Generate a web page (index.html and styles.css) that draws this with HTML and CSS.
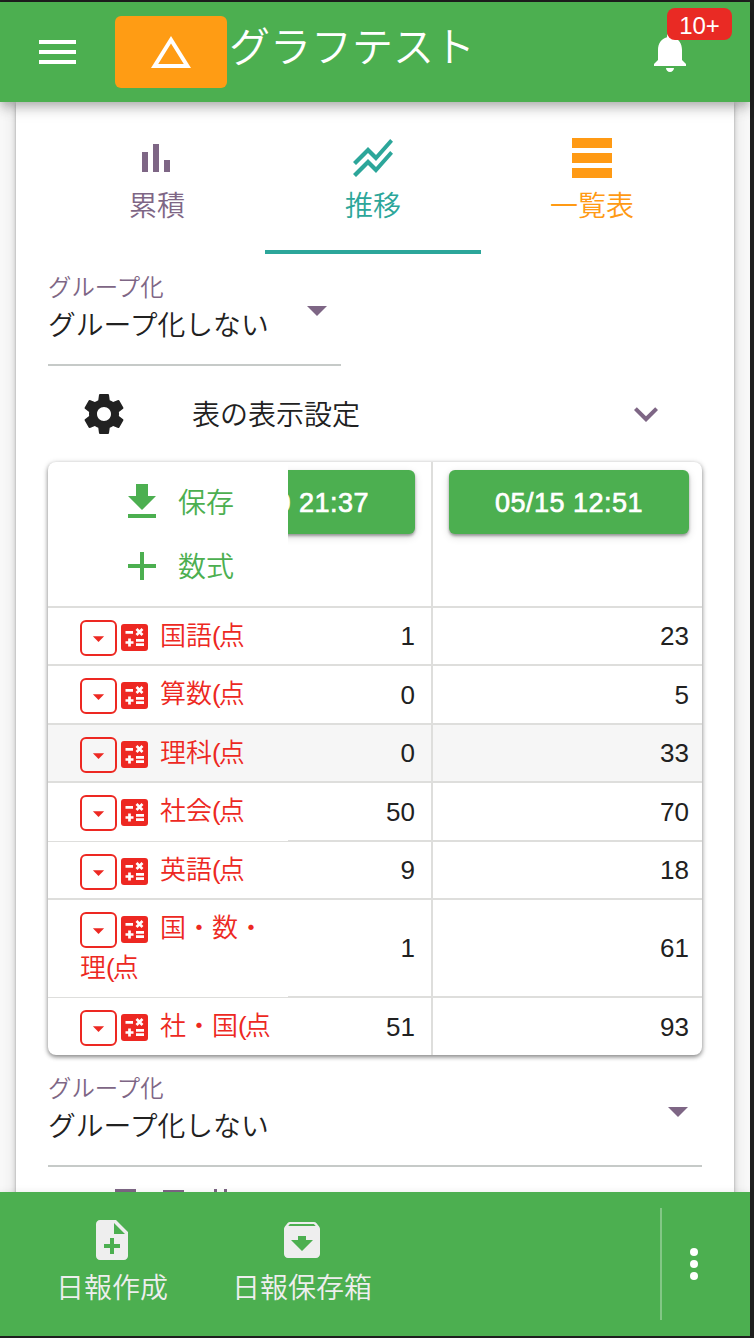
FILE: index.html
```html
<!DOCTYPE html>
<html lang="ja">
<head>
<meta charset="utf-8">
<title>グラフテスト</title>
<link rel="stylesheet" href="styles.css">
</head>
<body>
<svg class="defs" aria-hidden="true">
  <symbol id="down" viewBox="0 0 24 24"><path d="M7 10l5 5 5-5z"/></symbol>
  <symbol id="calc" viewBox="0 0 27 27">
    <rect width="27" height="27" rx="3"/>
    <g stroke="#fff" stroke-width="2.7" fill="none"><path d="M4.5 8.3H12M15.5 5l6 6M21.5 5l-6 6M4.5 18.5h8M8.5 14.5v8M15 16.3h8M15 20.6h8"/></g>
  </symbol>
</svg>
<div class="app">
  <header class="bar">
    <svg class="menu" viewBox="0 0 37 24"><path d="M0 0h37v4H0zM0 10h37v4H0zM0 20h37v4H0z"/></svg>
    <button class="logo"><svg class="icon" viewBox="0 0 24 24"><path d="M12 7.77L18.39 18H5.61L12 7.77M12 4L2 20h20L12 4z"/></svg></button>
    <h1 class="title">グラフテスト</h1>
    <div class="bell">
      <svg class="icon" viewBox="0 0 24 24"><path d="M12 22c1.1 0 2-.9 2-2h-4c0 1.1.89 2 2 2zm6-6v-5c0-3.07-1.64-5.64-4.5-6.32V4c0-.83-.67-1.5-1.5-1.5s-1.5.67-1.5 1.5v.68C7.63 5.36 6 7.92 6 11v5l-2 2v1h16v-1l-2-2z"/></svg>
      <span class="badge">10+</span>
    </div>
  </header>

  <main class="content">
    <section class="sheet">
      <nav class="tabs">
        <a class="tab purple"><svg class="icon" viewBox="0 0 48 48"><path d="M9 18h6v20H9zM20 10h6v28h-6zM31 26h6v12h-6z"/></svg><span>累積</span></a>
        <a class="tab active"><svg class="icon" viewBox="0 0 24 24"><path d="M2 19.99l7.5-7.51 4 4 7.09-7.97L22 9.92l-8.5 9.56-4-4-6 6.01-1.5-1.5zm1.5-4.5l6-6.01 4 4L22 3.92l-1.41-1.41-7.09 7.97-4-4L2 13.99l1.5 1.5z"/></svg><span>推移</span></a>
        <a class="tab orange"><svg class="icon" viewBox="0 0 48 48"><path d="M4 4h40v10H4zM4 19h40v10H4zM4 34h40v10H4z"/></svg><span>一覧表</span></a>
      </nav>

      <div class="select narrow">
        <div><div class="label">グループ化</div><div class="value">グループ化しない</div></div>
        <svg class="icon"><use href="#down"/></svg>
      </div>

      <div class="settings">
        <svg class="icon" viewBox="0 0 24 24"><path d="M19.43 12.98c.04-.32.07-.64.07-.98s-.03-.66-.07-.98l2.11-1.65c.19-.15.24-.42.12-.64l-2-3.46c-.12-.22-.39-.3-.61-.22l-2.49 1c-.52-.4-1.08-.73-1.69-.98l-.38-2.65C14.46 2.18 14.25 2 14 2h-4c-.25 0-.46.18-.49.42l-.38 2.65c-.61.25-1.17.59-1.69.98l-2.49-1c-.23-.09-.49 0-.61.22l-2 3.46c-.13.22-.07.49.12.64l2.11 1.65c-.04.32-.07.65-.07.98s.03.66.07.98l-2.11 1.65c-.19.15-.24.42-.12.64l2 3.46c.12.22.39.3.61.22l2.49-1c.52.4 1.08.73 1.69.98l.38 2.65c.03.24.24.42.49.42h4c.25 0 .46-.18.49-.42l.38-2.65c.61-.25 1.17-.59 1.69-.98l2.49 1c.23.09.49 0 .61-.22l2-3.46c.12-.22.07-.49-.12-.64l-2.11-1.65zM12 15.5c-1.93 0-3.5-1.57-3.5-3.5s1.57-3.5 3.5-3.5 3.5 1.57 3.5 3.5-1.57 3.5-3.5 3.5z"/></svg>
        <span class="settings-name">表の表示設定</span>
        <svg class="icon purple" viewBox="0 0 24 24"><path d="M16.59 8.59L12 13.17 7.41 8.59 6 10l6 6 6-6z"/></svg>
      </div>

      <div class="table">
        <div class="row head">
          <div class="actions">
            <a class="action"><svg class="icon" viewBox="0 0 24 24"><path d="M19 9h-4V3H9v6H5l7 7 7-7zM5 18v2h14v-2z"/></svg><span>保存</span></a>
            <a class="action"><svg class="icon" viewBox="0 0 24 24"><path d="M19 13h-6v6h-2v-6H5v-2h6V5h2v6h6z"/></svg><span>数式</span></a>
          </div>
          <div class="date clip"><button class="chip">05/10 21:37</button></div>
          <div class="date"><button class="chip">05/15 12:51</button></div>
        </div>
        <div class="row"><div class="name"><span class="drop"><svg class="tiny"><use href="#down"/></svg></span><svg class="calc"><use href="#calc"/></svg>国語<i>(</i>点</div><div class="num">1</div><div class="num">23</div></div>
        <div class="row tall"><div class="name"><span class="drop"><svg class="tiny"><use href="#down"/></svg></span><svg class="calc"><use href="#calc"/></svg>算数<i>(</i>点</div><div class="num">0</div><div class="num">5</div></div>
        <div class="row hover"><div class="name"><span class="drop"><svg class="tiny"><use href="#down"/></svg></span><svg class="calc"><use href="#calc"/></svg>理科<i>(</i>点</div><div class="num">0</div><div class="num">33</div></div>
        <div class="row tall thin"><div class="name"><span class="drop"><svg class="tiny"><use href="#down"/></svg></span><svg class="calc"><use href="#calc"/></svg>社会<i>(</i>点</div><div class="num">50</div><div class="num">70</div></div>
        <div class="row"><div class="name"><span class="drop"><svg class="tiny"><use href="#down"/></svg></span><svg class="calc"><use href="#calc"/></svg>英語<i>(</i>点</div><div class="num">9</div><div class="num">18</div></div>
        <div class="row double thin"><div class="name"><span class="drop"><svg class="tiny"><use href="#down"/></svg></span><svg class="calc"><use href="#calc"/></svg>国・数・<br>理<i>(</i>点</div><div class="num">1</div><div class="num">61</div></div>
        <div class="row last"><div class="name"><span class="drop"><svg class="tiny"><use href="#down"/></svg></span><svg class="calc"><use href="#calc"/></svg>社・国<i>(</i>点</div><div class="num">51</div><div class="num">93</div></div>
      </div>

      <div class="select wide">
        <div><div class="label">グループ化</div><div class="value">グループ化しない</div></div>
        <svg class="icon"><use href="#down"/></svg>
      </div>
      <svg class="peek" viewBox="0 0 120 6"><path d="M0 2h21v4H0zM48 3h21v3H48zM99 2h3v4h-3zM109 2h3v4h-3z"/></svg>
    </section>
  </main>

  <footer class="foot">
    <a class="foot-item first"><svg class="icon" viewBox="0 0 24 24"><path d="M14 2H6c-1.1 0-1.99.9-1.99 2L4 20c0 1.1.89 2 1.99 2H18c1.1 0 2-.9 2-2V8l-6-6zm2 14h-3v3h-2v-3H8v-2h3v-3h2v3h3v2zm-3-7V3.5L18.5 9H13z"/></svg><span>日報作成</span></a>
    <a class="foot-item"><svg class="icon" viewBox="0 0 24 24"><path d="M20.54 5.23l-1.39-1.68C18.88 3.21 18.47 3 18 3H6c-.47 0-.88.21-1.16.55L3.46 5.23C3.17 5.57 3 6.02 3 6.5V19c0 1.1.9 2 2 2h14c1.1 0 2-.9 2-2V6.5c0-.48-.17-.93-.46-1.27zM12 17.5L6.5 12H10v-2h4v2h3.5L12 17.5zM5.12 5l.81-1h12l.94 1H5.12z"/></svg><span>日報保存箱</span></a>
    <div class="more"><svg class="icon" viewBox="0 0 24 24"><circle cx="12" cy="6" r="2"/><circle cx="12" cy="12" r="2"/><circle cx="12" cy="18" r="2"/></svg></div>
  </footer>
</div>
</body>
</html>
```
FILE: styles.css
```css
* { box-sizing: border-box; }
body {
  margin: 0;
  height: 1338px;
  padding: 2px 4px 2px 0;
  overflow: hidden;
  background: #202020;
  color: #212121;
  font-family: "Liberation Sans", "Noto Sans CJK JP", sans-serif;
  font-size: 28px;
  font-weight: 350;
}
button { border: 0; padding: 0; font: inherit; color: inherit; }
svg { display: block; fill: currentColor; flex: none; }
i { font-style: normal; letter-spacing: -2px; }
.defs { position: absolute; width: 0; height: 0; }
.icon { width: 48px; height: 48px; }
.purple { color: #7e6685; }

.app { display: flex; flex-direction: column; height: 1334px; background: #f9f9f9; }

.bar {
  position: relative;
  z-index: 2;
  flex: none;
  display: flex;
  align-items: flex-start;
  height: 100px;
  padding-left: 39px;
  background: #4caf50;
  color: #fff;
  box-shadow: 0 4px 8px -2px rgba(0,0,0,.16), 0 8px 10px rgba(0,0,0,.13), 0 2px 20px rgba(0,0,0,.1);
}
.menu { width: 37px; height: 24px; margin-top: 38px; }
.logo {
  display: flex;
  align-items: center;
  justify-content: center;
  width: 112px;
  height: 72px;
  margin: 14px 0 0 39px;
  border-radius: 6px;
  background: #ff9c14;
}
.title { flex: 1; margin: 16px 0 0 2px; font-size: 41px; line-height: 60px; font-weight: 350; }
.bell { position: relative; margin: 26px 56px 0 0; }
.badge {
  position: absolute;
  left: 21px;
  top: -20px;
  width: 65px;
  height: 32px;
  border-radius: 8px;
  background: #e92a24;
  font-size: 24px;
  line-height: 35px;
  text-align: center;
}

.content { flex: 1; min-height: 0; overflow: hidden; }
.sheet {
  height: 1130px;
  margin: 0 16px;
  padding: 0 32px;
  background: #fff;
  box-shadow: 0 2px 2px rgba(0,0,0,.2), 0 0 6px rgba(0,0,0,.2), 0 2px 18px rgba(0,0,0,.1);
}

.tabs { display: grid; grid-template-columns: 216px 216px 222px; margin-left: 1px; }
.tab {
  display: flex;
  flex-direction: column;
  align-items: center;
  height: 152px;
  padding-top: 32px;
  line-height: 40px;
}
.tab span { margin-top: 5px; }
.tab.active { color: #2ca69a; border-bottom: 4px solid #2ca69a; }
.tab.orange { color: #ff9a14; }

.select {
  display: flex;
  justify-content: space-between;
  height: 112px;
  border-bottom: 2px solid #c6cac8;
}
.narrow { width: 293px; }
.label { margin-top: 18px; font-size: 23.4px; line-height: 32px; color: #7e6685; }
.value { margin-top: 1px; font-size: 27.8px; line-height: 42px; }
.select .icon { margin: 32px 0 0; color: #7e6685; }

.settings { display: flex; align-items: center; height: 96px; padding: 0 32px; }
.settings-name { flex: 1; margin: -3px 0 0 64px; }

.table {
  border-radius: 8px;
  overflow: hidden;
  box-shadow: 0 2px 4px rgba(0,0,0,.4), 0 1px 6px rgba(0,0,0,.16);
}
.row { display: grid; grid-template-columns: 240px 145px 269px; height: 58px; }
.row > div { border-bottom: 2px solid #dededc; }
.row > div:nth-child(2) { border-right: 2px solid #dededc; }
.head { height: 146px; }
.tall { height: 59px; }
.double { height: 98px; }
.last { height: 57px; }
.row.last > div { border-bottom: 0; }
.row.thin > .name { border-bottom-width: 1px; }
.hover { background: #f6f6f6; }

.actions { padding-top: 8px; color: #4caf50; }
.action { display: flex; align-items: center; height: 64px; padding-left: 70px; gap: 12px; }
.action span { margin-top: -3px; }
.date { display: flex; justify-content: flex-end; padding: 8px 13px 0 0; }
.clip { overflow: hidden; padding-right: 16px; }
.chip {
  flex: none;
  width: 240px;
  height: 64px;
  padding-top: 2px;
  border-radius: 6px;
  background: #4caf50;
  color: #fff;
  font-size: 27px;
  letter-spacing: .5px;
  -webkit-text-stroke: .7px #fff;
  box-shadow: 0 2px 3px rgba(0,0,0,.35), 0 3px 8px rgba(0,0,0,.14);
}

.name { padding: 8px 0 0 32px; color: #ed2822; font-size: 26px; line-height: 40px; white-space: nowrap; }
.drop {
  display: inline-flex;
  align-items: center;
  justify-content: center;
  width: 37px;
  height: 36px;
  border: 2px solid #ed2822;
  border-radius: 6px;
  vertical-align: top;
  margin-top: 4px;
}
.tiny { width: 27px; height: 27px; margin-right: 1px; }
.calc { display: inline-block; width: 27px; height: 27px; margin: 8px 12px 0 4px; vertical-align: top; }
.num { display: flex; align-items: center; justify-content: flex-end; padding: 1px 13px 0 0; font-size: 26px; }
.num:nth-child(2) { padding-right: 16px; }

.wide { height: 112px; }
.peek { width: 120px; height: 6px; margin: 20px 0 0 67px; color: #7e6685; }

.foot {
  position: relative;
  z-index: 2;
  flex: none;
  display: flex;
  height: 144px;
  background: #4caf50;
  color: #eee;
  box-shadow: 0 0 8px rgba(0,0,0,.08);
}
.foot-item { display: flex; flex-direction: column; align-items: center; padding-top: 24px; line-height: 40px; margin-left: 64px; }
.foot-item.first { margin-left: 56px; }
.foot-item span { margin-top: 5px; }
.more { margin: 16px 32px 16px auto; padding: 32px 0 0 8px; border-left: 2px solid #83c786; color: #fff; }
```
